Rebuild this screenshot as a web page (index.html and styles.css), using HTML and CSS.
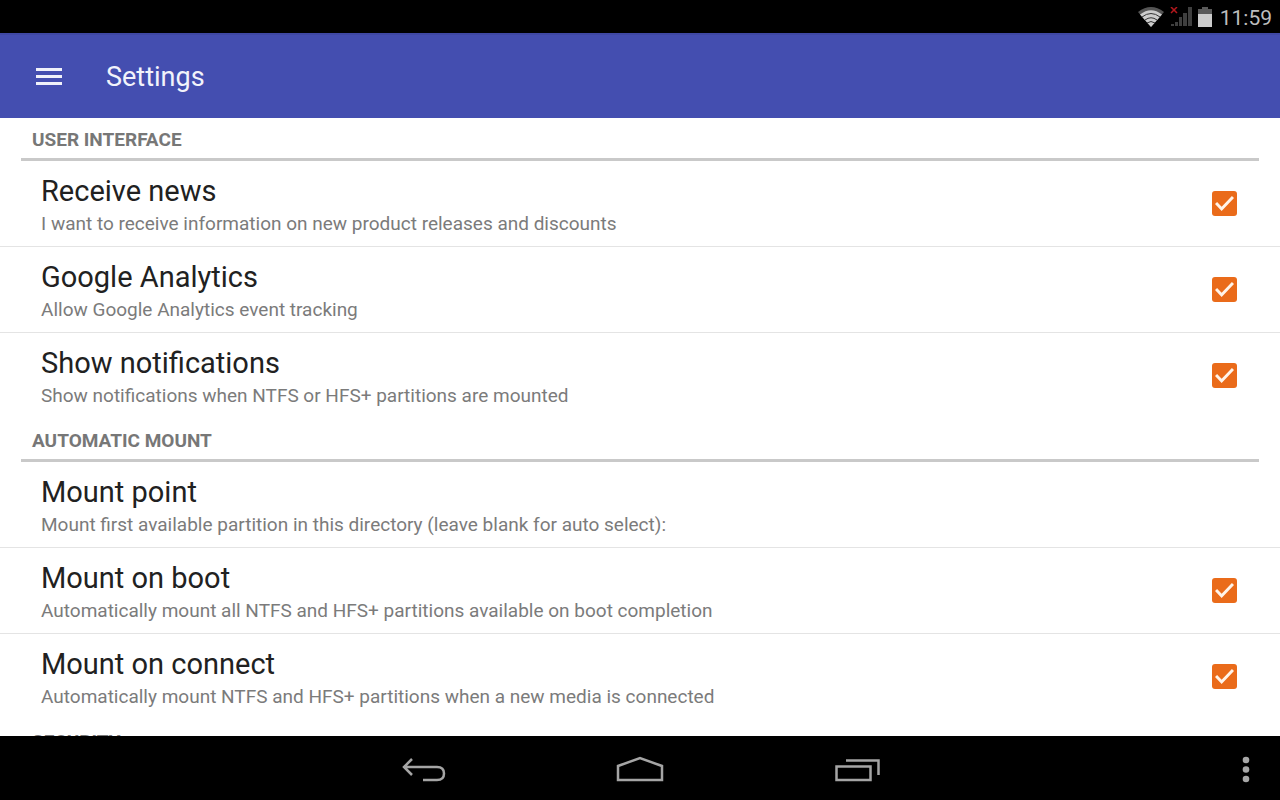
FILE: index.html
```html
<!DOCTYPE html>
<html lang="en">
<head>
<meta charset="utf-8">
<meta name="viewport" content="width=device-width, initial-scale=1">
<title>Settings</title>
<link rel="stylesheet" href="styles.css">
</head>
<body>
<div class="status-bar">
  <svg class="status-wifi" viewBox="0 0 26 20" width="26" height="20" aria-hidden="true">
    <path d="M0 5Q13 -5 26 5L13 20Z" fill="#555"/>
    <path d="M2 7.500Q13 -1 24 7.500L13 20Z" fill="#ccc"/>
    <path d="M4 10Q13 3 22 10M7 13Q13 8.500 19 13M9 16Q13 13 17 16" fill="none" stroke="#333" stroke-width="1"/>
  </svg>
  <svg class="status-signal" viewBox="0 0 22 20" width="22" height="20" aria-hidden="true">
    <path d="M1 17h3v2H1zM5 15h3v4H5zM9 10h3v9H9zM13 6h4v13h-4zM18 0h4v19h-4z" fill="#3f3f3f"/>
    <path d="M1 0l6 6M7 0L1 6" stroke="#b3171c" stroke-width="1.500"/>
  </svg>
  <svg class="status-battery" viewBox="0 0 14 20" width="14" height="20" aria-hidden="true">
    <path d="M4 0h6v2h4v6H0V2h4z" fill="#5a5a5a"/>
    <path d="M0 7h14v13H0z" fill="#ccc"/>
  </svg>
  <time class="clock">11:59</time>
</div>
<header class="app-bar">
  <button class="menu-button" type="button" aria-label="Open menu">
    <svg viewBox="0 0 26 20" width="26" height="20"><path d="M0 2.500h26M0 9.500h26M0 16.500h26" stroke="#f0f1fa" stroke-width="3"/></svg>
  </button>
  <h1 class="app-title">Settings</h1>
</header>
<main class="settings">
  <section class="group">
    <h2 class="group-title">USER INTERFACE</h2>
    <label class="row">
      <span class="row-text"><span class="row-title">Receive news</span><span class="row-note">I want to receive information on new product releases and discounts</span></span>
      <input class="check" type="checkbox" checked>
    </label>
    <label class="row">
      <span class="row-text"><span class="row-title">Google Analytics</span><span class="row-note">Allow Google Analytics event tracking</span></span>
      <input class="check" type="checkbox" checked>
    </label>
    <label class="row">
      <span class="row-text"><span class="row-title">Show notifications</span><span class="row-note">Show notifications when NTFS or HFS+ partitions are mounted</span></span>
      <input class="check" type="checkbox" checked>
    </label>
  </section>
  <section class="group">
    <h2 class="group-title">AUTOMATIC MOUNT</h2>
    <button class="row" type="button">
      <span class="row-text"><span class="row-title">Mount point</span><span class="row-note">Mount first available partition in this directory (leave blank for auto select):</span></span>
    </button>
    <label class="row">
      <span class="row-text"><span class="row-title">Mount on boot</span><span class="row-note">Automatically mount all NTFS and HFS+ partitions available on boot completion</span></span>
      <input class="check" type="checkbox" checked>
    </label>
    <label class="row">
      <span class="row-text"><span class="row-title">Mount on connect</span><span class="row-note">Automatically mount NTFS and HFS+ partitions when a new media is connected</span></span>
      <input class="check" type="checkbox" checked>
    </label>
  </section>
  <section class="group">
    <h2 class="group-title">SECURITY</h2>
  </section>
</main>
<nav class="nav-bar" aria-label="System">
  <div class="nav-keys">
    <button class="nav-button" type="button" aria-label="Back">
      <svg viewBox="0 0 48 28" width="48" height="28"><path d="M12 3L4 11L12 19M4 11H37Q44 11 44 17.500Q44 24 37 24H23" fill="none" stroke="#a5a5a5" stroke-width="2.500"/></svg>
    </button>
    <button class="nav-button" type="button" aria-label="Home">
      <svg viewBox="0 0 48 28" width="48" height="28"><path d="M2 24V10L24 2L46 10V24Z" fill="none" stroke="#a5a5a5" stroke-width="2.500"/></svg>
    </button>
    <button class="nav-button" type="button" aria-label="Recent apps">
      <svg viewBox="0 0 48 28" width="48" height="28"><path d="M4.500 10.500H38.500V24H4.500ZM14 4.500H46.500V19" fill="none" stroke="#a5a5a5" stroke-width="2.500"/></svg>
    </button>
  </div>
  <button class="more-button" type="button" aria-label="More options">
    <svg viewBox="0 0 8 28" width="8" height="28" fill="#a8a8a8"><circle cx="4" cy="4" r="3.300"/><circle cx="4" cy="13.500" r="3.300"/><circle cx="4" cy="23" r="3.300"/></svg>
  </button>
</nav>
</body>
</html>
```
FILE: styles.css
```css
* { box-sizing: border-box; }
body {
  margin: 0;
  height: 100vh;
  display: flex;
  flex-direction: column;
  background: #fff;
  color: #212121;
  font-family: Roboto, "Noto Sans", sans-serif;
}
button {
  border: 0;
  padding: 0;
  background: none;
  color: inherit;
  font: inherit;
  text-align: left;
}
svg { display: block; }
.status-bar {
  flex: none;
  display: flex;
  align-items: center;
  justify-content: flex-end;
  padding: 0 8px;
  height: 33px;
  background: #000;
}
.status-wifi { margin-right: 6px; }
.status-signal { margin-right: 6px; }
.status-battery { margin-right: 8px; }
.clock {
  padding-top: 2px;
  color: #bdbdbd;
  font-size: 21px;
  line-height: 30px;
}
.app-bar {
  flex: none;
  display: flex;
  align-items: center;
  gap: 44px;
  padding: 0 36px;
  height: 85px;
  border-top: 2px solid #3f48a4;
  background: #444eb0;
}
.app-title {
  margin: 0;
  color: #f2f3fb;
  font-size: 27px;
  font-weight: 400;
  line-height: 36px;
}
.settings {
  flex: 1;
  min-height: 0;
  overflow: hidden;
}
.group-title {
  margin: 0 21px;
  padding: 8px 11px 5px;
  border-bottom: 3px solid #c9c9c9;
  color: #777;
  font-size: 19px;
  font-weight: 700;
  line-height: 27px;
}
.row {
  display: flex;
  align-items: center;
  justify-content: space-between;
  width: 100%;
  padding: 9px 43px 9px 41px;
  border-bottom: 1px solid #e4e4e4;
}
.row:last-child { border-bottom-color: transparent; }
.row-text {
  display: flex;
  flex-direction: column;
}
.row-title {
  padding-top: 3px;
  font-size: 29px;
  line-height: 36px;
}
.row-note {
  padding-top: 2px;
  color: #7b7b7b;
  font-size: 19px;
  line-height: 26px;
}
.check {
  flex: none;
  appearance: none;
  display: grid;
  place-items: center;
  width: 25px;
  height: 25px;
  margin: 0;
  border-radius: 3px;
  background: #ea6b1a;
}
.check:checked::before {
  content: "";
  width: 19px;
  height: 15px;
  background: #fff4ea;
  clip-path: polygon(0 54%, 11% 40%, 35% 72%, 89% 0, 100% 14%, 35% 100%);
}
.nav-bar {
  flex: none;
  display: grid;
  grid-template-columns: 1fr auto 1fr;
  align-items: center;
  height: 64px;
  padding: 4px 30px 0;
  background: #000;
}
.nav-keys {
  grid-column: 2;
  display: flex;
  gap: 168px;
}
.more-button { justify-self: end; }
```
